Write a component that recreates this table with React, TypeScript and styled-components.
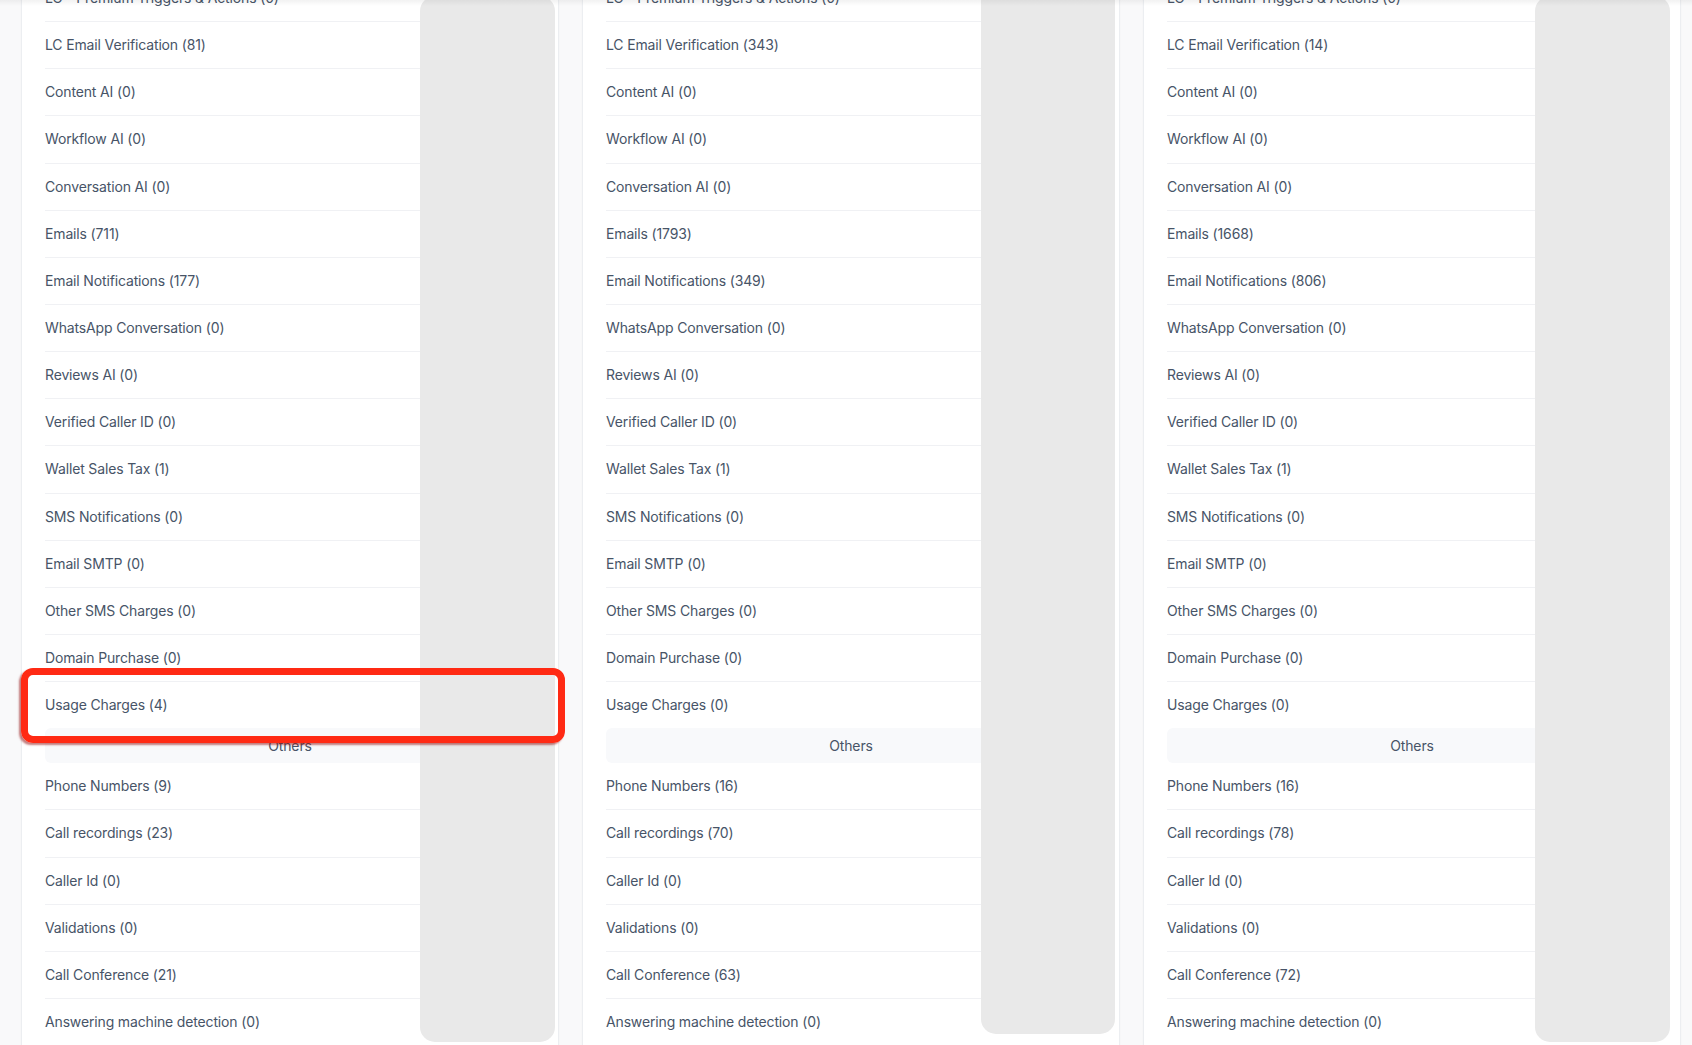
import styled, { createGlobalStyle } from 'styled-components';

type Item = { label: string; count: number };

type Column = {
  usage: Item[];
  others: Item[];
  cover: { left: number; top: number; width: number; height: number };
  highlight?: boolean;
};

const usageLabels = [
  'LC - Premium Triggers & Actions',
  'LC Email Verification',
  'Content AI',
  'Workflow AI',
  'Conversation AI',
  'Emails',
  'Email Notifications',
  'WhatsApp Conversation',
  'Reviews AI',
  'Verified Caller ID',
  'Wallet Sales Tax',
  'SMS Notifications',
  'Email SMTP',
  'Other SMS Charges',
  'Domain Purchase',
  'Usage Charges',
];

const otherLabels = [
  'Phone Numbers',
  'Call recordings',
  'Caller Id',
  'Validations',
  'Call Conference',
  'Answering machine detection',
];

const zip = (labels: string[], counts: number[]): Item[] =>
  labels.map((label, i) => ({ label, count: counts[i] }));

const columns: Column[] = [
  {
    usage: zip(usageLabels, [0, 81, 0, 0, 0, 711, 177, 0, 0, 0, 1, 0, 0, 0, 0, 4]),
    others: zip(otherLabels, [9, 23, 0, 0, 21, 0]),
    cover: { left: 398, top: 21, width: 135, height: 1046 },
    highlight: true,
  },
  {
    usage: zip(usageLabels, [0, 343, 0, 0, 0, 1793, 349, 0, 0, 0, 1, 0, 0, 0, 0, 0]),
    others: zip(otherLabels, [16, 70, 0, 0, 63, 0]),
    cover: { left: 398, top: -1, width: 134, height: 1060 },
  },
  {
    usage: zip(usageLabels, [0, 14, 0, 0, 0, 1668, 806, 0, 0, 0, 1, 0, 0, 0, 0, 0]),
    others: zip(otherLabels, [16, 78, 0, 0, 72, 0]),
    cover: { left: 391, top: 21, width: 135, height: 1046 },
  },
];

const App = () => {
  return (
    <>
      <GlobalStyle />
      <Page>
        <TopShade />
        <Columns>
          {columns.map((col, idx) => (
            <Card key={idx}>
              <Group>
                {col.usage.map((item) => (
                  <Row key={item.label}>
                    {item.label} ({item.count})
                  </Row>
                ))}
              </Group>
              <SectionTitle>Others</SectionTitle>
              <Group $bordered>
                {col.others.map((item) => (
                  <Row key={item.label}>
                    {item.label} ({item.count})
                  </Row>
                ))}
              </Group>
              <Cover
                style={{
                  left: col.cover.left,
                  top: col.cover.top,
                  width: col.cover.width,
                  height: col.cover.height,
                }}
              />
              {col.highlight && <Highlight />}
            </Card>
          ))}
        </Columns>
      </Page>
    </>
  );
};

export default App;

// Styled Components
const GlobalStyle = createGlobalStyle`
  html, body {
    margin: 0;
    padding: 0;
    background: #f9f9fa;
    overflow: hidden;
  }
  * {
    box-sizing: border-box;
  }
  body {
    font-family: Inter, "Noto Sans", "Liberation Sans", sans-serif;
  }
`;

const Page = styled.div`
  width: 1692px;
  height: 1045px;
  overflow: hidden;
  position: relative;
  background: #f9f9fa;
`;

const TopShade = styled.div`
  position: absolute;
  top: 0;
  left: 0;
  right: 0;
  height: 6px;
  background: linear-gradient(rgba(0, 0, 0, 0.05), rgba(0, 0, 0, 0));
  z-index: 5;
`;

const Columns = styled.div`
  display: grid;
  grid-template-columns: repeat(3, 538px);
  column-gap: 23px;
  padding: 0 10px 0 21px;
  margin-top: -26px;
`;

const Card = styled.div`
  position: relative;
  background: #ffffff;
  border: 1px solid #eceef1;
  border-radius: 8px;
  padding: 0 23px 40px;
  box-shadow: 0 1px 2px rgba(16, 24, 40, 0.03);
`;

const Group = styled.div<{ $bordered?: boolean }>`
  display: flex;
  flex-direction: column;

  & > div:last-child {
    border-bottom: ${(p) => (p.$bordered ? '1px solid #f0f1f4' : 'none')};
    height: ${(p) => (p.$bordered ? '47.15px' : '46.15px')};
  }
`;

const Row = styled.div`
  display: flex;
  align-items: center;
  height: 47.15px;
  border-bottom: 1px solid #f0f1f4;
  font-size: 14px;
  line-height: 20px;
  letter-spacing: -0.15px;
  color: #475467;
  white-space: nowrap;
`;

const SectionTitle = styled.div`
  display: flex;
  align-items: center;
  justify-content: center;
  height: 35px;
  background: #f8f9fb;
  border-radius: 6px;
  font-size: 14px;
  line-height: 20px;
  letter-spacing: -0.15px;
  color: #475467;
`;

const Cover = styled.div`
  position: absolute;
  background: #e9e9e9;
  border-radius: 15px;
`;

const Highlight = styled.div`
  position: absolute;
  left: -1px;
  top: 693px;
  width: 544px;
  height: 75px;
  border: 7px solid #ff2a14;
  border-radius: 12px;
  box-shadow: -2px 2px 2px rgba(150, 20, 20, 0.55);
  z-index: 3;
`;
